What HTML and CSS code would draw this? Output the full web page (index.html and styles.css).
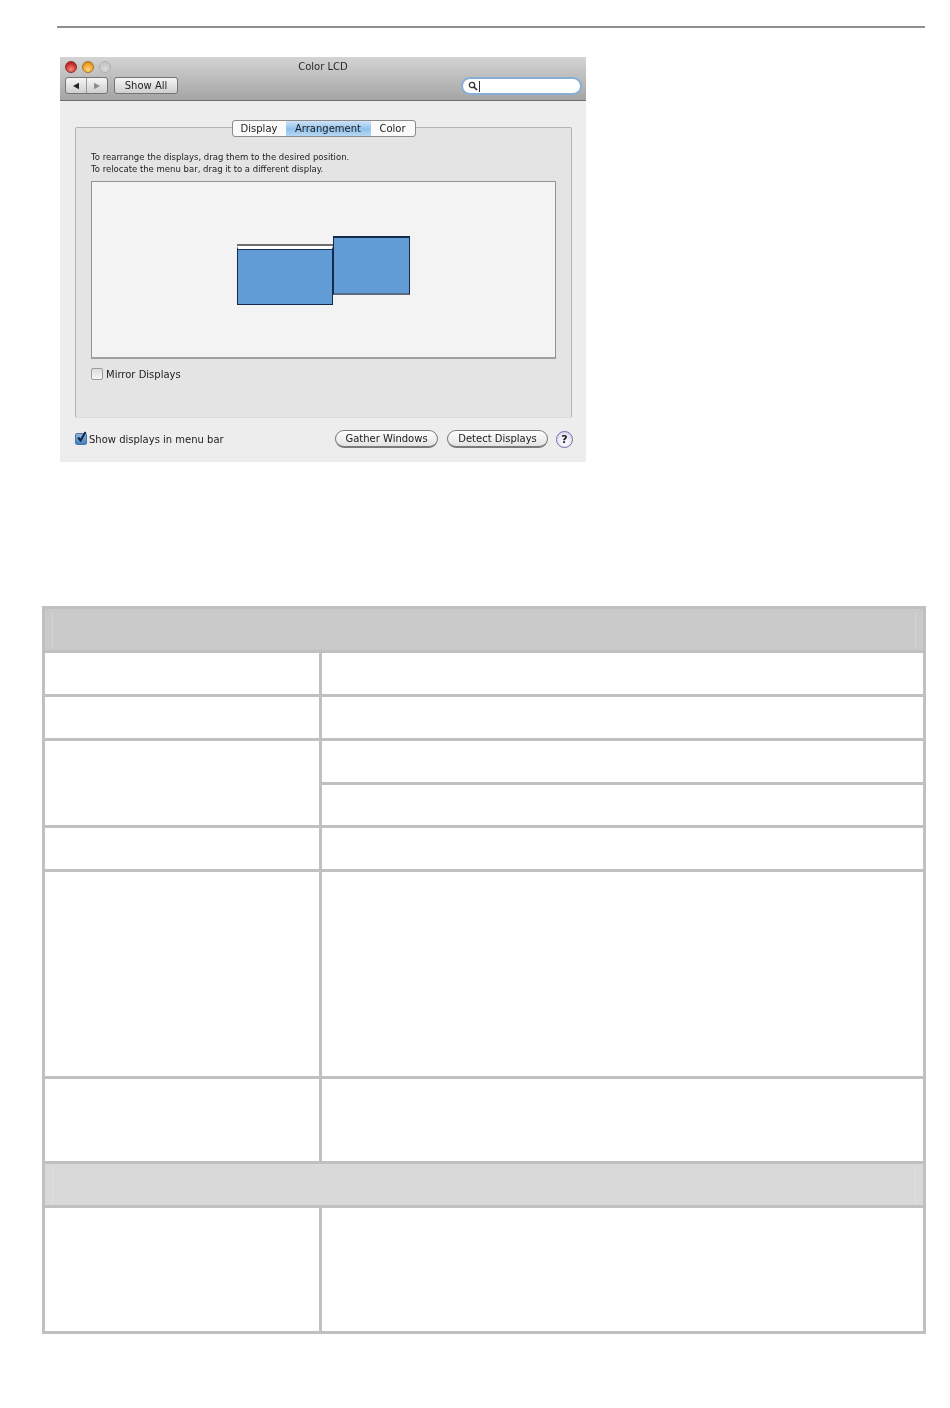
FILE: index.html
```html
<!DOCTYPE html>
<html lang="en">
<head>
    <meta charset="UTF-8">
    <title>Color LCD</title>
    <link rel="stylesheet" href="styles.css">
</head>
<body>
    <hr class="page-rule">

    <div class="prefs-window">
        <div class="titlebar">
            <div class="title-row">
                <div class="lights">
                    <span class="light light-close"></span>
                    <span class="light light-min"></span>
                    <span class="light light-zoom"></span>
                </div>
                <div class="window-title">Color LCD</div>
            </div>
            <div class="toolbar">
                <div class="nav-buttons">
                    <span class="nav-btn"><svg width="8" height="8" viewBox="0 0 8 8"><path d="M1 4 7 .8v6.4z" fill="#222"/></svg></span>
                    <span class="nav-btn"><svg width="8" height="8" viewBox="0 0 8 8"><path d="M7 4 1 .8v6.4z" fill="#8c8c8c"/></svg></span>
                </div>
                <span class="show-all">Show All</span>
                <div class="search-box">
                    <svg width="10" height="10" viewBox="0 0 10 10"><circle cx="4" cy="4" r="2.7" fill="none" stroke="#333" stroke-width="1.3"/><path d="M6 6l3 3" stroke="#333" stroke-width="1.7"/></svg>
                    <span class="caret"></span>
                </div>
            </div>
        </div>

        <div class="window-body">
            <div class="panel">
                <div class="tabs">
                    <span class="tab tab-display">Display</span>
                    <span class="tab tab-active">Arrangement</span>
                    <span class="tab tab-color">Color</span>
                </div>
                <p class="hint">To rearrange the displays, drag them to the desired position.<br>To relocate the menu bar, drag it to a different display.</p>
                <div class="arrange-well">
                    <div class="screen screen-main"></div>
                    <div class="screen screen-second"></div>
                </div>
                <label class="check-row">
                    <span class="checkbox"></span>
                    <span>Mirror Displays</span>
                </label>
            </div>

            <div class="bottom-row">
                <label class="check-row menu-check">
                    <span class="checkbox checkbox-on">
                        <svg width="13" height="13" viewBox="0 0 13 13"><path d="M3 6.5l2.6 3L10.5 1" fill="none" stroke="#16233f" stroke-width="2"/></svg>
                    </span>
                    <span>Show displays in menu bar</span>
                </label>
                <div class="bottom-actions">
                    <span class="pill-btn pill-gather">Gather Windows</span>
                    <span class="pill-btn pill-detect">Detect Displays</span>
                    <span class="help-btn">?</span>
                </div>
            </div>
        </div>
    </div>

    <table class="spec-table">
        <colgroup>
            <col class="col-label">
            <col>
        </colgroup>
        <tr class="row">
            <td class="band band-dark" colspan="2"><div class="band-inner"></div></td>
        </tr>
        <tr class="row"><td></td><td></td></tr>
        <tr class="row"><td></td><td></td></tr>
        <tr class="row"><td rowspan="2"></td><td></td></tr>
        <tr class="row-short"><td></td></tr>
        <tr class="row"><td></td><td></td></tr>
        <tr class="row-big"><td></td><td></td></tr>
        <tr class="row-mid"><td></td><td></td></tr>
        <tr class="row">
            <td class="band band-light" colspan="2"><div class="band-inner"></div></td>
        </tr>
        <tr class="row-large"><td></td><td></td></tr>
    </table>
</body>
</html>
```

FILE: styles.css
```css
body {
    margin: 0;
    height: 1408px;
    background: #fff;
    font-family: "DejaVu Sans", sans-serif;
    color: #222;
    overflow: hidden;
}

.page-rule {
    width: 868px;
    height: 2px;
    margin: 26px 0 0 57px;
    border: none;
    background: #8f8f8f;
}

.prefs-window {
    width: 526px;
    margin: 29px 0 0 60px;
    background: #ededed;
    filter: blur(0.35px);
}

/* title bar + toolbar */
.titlebar {
    height: 44px;
    box-sizing: border-box;
    background: linear-gradient(#d4d4d4, #a4a4a4);
    border-bottom: 1px solid #6f6f6f;
}

.title-row {
    position: relative;
    height: 20px;
    display: flex;
    align-items: center;
    justify-content: center;
}

.window-title {
    font-size: 10px;
    margin-top: -2px;
    color: #2a2a2a;
}

.lights {
    position: absolute;
    left: 5px;
    top: 4px;
    display: flex;
    gap: 5px;
}

.light {
    width: 12px;
    height: 12px;
    border-radius: 50%;
    box-sizing: border-box;
}

.light-close {
    background: radial-gradient(circle at 50% 75%, #f58a80, #c92a26 65%, #8d1f1f);
    border: 1px solid #8a2b2b;
}

.light-min {
    background: radial-gradient(circle at 50% 75%, #fbd680, #ee9b1e 65%, #b9711a);
    border: 1px solid #a87422;
}

.light-zoom {
    background: radial-gradient(circle at 50% 75%, #d8d8d8, #c0c0c0);
    border: 1px solid #b0b0b0;
}

.toolbar {
    height: 18px;
    display: flex;
    align-items: flex-start;
    padding: 0 4px 0 5px;
}

.nav-buttons {
    display: flex;
    width: 43px;
    height: 17px;
    box-sizing: border-box;
    border: 1px solid #747474;
    border-radius: 3px;
    background: linear-gradient(#f6f6f6, #cfcfcf);
}

.nav-btn {
    flex: 1;
    display: flex;
    align-items: center;
    justify-content: center;
}

.nav-btn + .nav-btn {
    border-left: 1px solid #9a9a9a;
}

.show-all {
    width: 64px;
    height: 17px;
    box-sizing: border-box;
    margin-left: 6px;
    border: 1px solid #747474;
    border-radius: 3px;
    background: linear-gradient(#f6f6f6, #cfcfcf);
    font-size: 10px;
    line-height: 15px;
    text-align: center;
}

.search-box {
    margin-left: auto;
    width: 121px;
    height: 18px;
    box-sizing: border-box;
    display: flex;
    align-items: center;
    gap: 1px;
    padding-left: 5px;
    background: #fff;
    border: 2px solid #86aed6;
    border-radius: 9px;
}

.caret {
    width: 1px;
    height: 11px;
    background: #333;
}

/* panel */
.window-body {
    height: 361px;
    box-sizing: border-box;
    padding: 26px 14px 0 15px;
}

.panel {
    height: 291px;
    box-sizing: border-box;
    padding: 0 15px;
    background: #e4e4e4;
    border: 1px solid #b4b4b4;
    border-bottom-color: #dcdcdc;
    border-radius: 2px;
}

.tabs {
    display: flex;
    width: 184px;
    height: 17px;
    box-sizing: border-box;
    margin: -8px auto 0;
    background: #fafafa;
    border: 1px solid #8b8b8b;
    border-radius: 3px;
    font-size: 10px;
    line-height: 15px;
}

.tab {
    text-align: center;
}

.tab-display {
    width: 53px;
}

.tab-active {
    width: 85px;
    background: linear-gradient(#cfe3f6, #8fc1ec 55%, #b7d8f4);
}

.tab-color {
    width: 44px;
}

.hint {
    margin: 14px 0 6px;
    font-size: 8.5px;
    line-height: 12px;
    white-space: nowrap;
}

.arrange-well {
    position: relative;
    height: 178px;
    box-sizing: border-box;
    background: #f3f3f3;
    border: 1px solid #939393;
    border-bottom: 2px solid #a0a0a0;
}

/* screens sit on a free canvas, so absolute is fine */
.screen {
    position: absolute;
    box-sizing: border-box;
    background: #619cd7;
    border: 1px solid #14294b;
}

.screen-main {
    left: 145px;
    top: 64px;
    width: 96px;
    height: 59px;
    border-top: 3px solid #fff;
    box-shadow: 0 -2px 0 #6f6f6f, inset 0 1px 0 #16305c;
}

.screen-second {
    left: 241px;
    top: 54px;
    width: 77px;
    height: 59px;
    border-top-width: 2px;
    border-bottom: 2px solid #5a6b84;
}

.check-row {
    display: flex;
    align-items: center;
    gap: 3px;
    height: 14px;
    margin-top: 8px;
    font-size: 10px;
}

.checkbox {
    width: 12px;
    height: 12px;
    box-sizing: border-box;
    flex: none;
    background: linear-gradient(#dcdcdc, #f6f6f6);
    border: 1px solid #9b9b9b;
    border-radius: 2px;
}

.checkbox-on {
    position: relative;
    background: linear-gradient(#8eb6dc, #3f82c4);
    border-color: #4c77a3;
}

.checkbox-on svg {
    position: absolute;
    left: -1px;
    top: -3px;
}

.bottom-row {
    display: flex;
    align-items: center;
    justify-content: space-between;
    height: 18px;
    margin-top: 12px;
}

.menu-check {
    margin-top: 0;
    gap: 2px;
}

.bottom-actions {
    display: flex;
    align-items: center;
    margin-right: -1px;
}

.pill-btn {
    height: 18px;
    box-sizing: border-box;
    border: 1px solid #7a7a7a;
    border-bottom-width: 2px;
    border-radius: 9px;
    background: linear-gradient(#fff, #e2e2e2);
    font-size: 10px;
    line-height: 15px;
    text-align: center;
}

.pill-gather {
    width: 103px;
}

.pill-detect {
    width: 101px;
    margin-left: 9px;
}

.help-btn {
    width: 17px;
    height: 17px;
    box-sizing: border-box;
    margin-left: 8px;
    border: 1px solid #7b68a8;
    border-radius: 50%;
    background: radial-gradient(circle at 50% 70%, #fff, #d6cfee);
    font-size: 11px;
    font-weight: bold;
    line-height: 15px;
    text-align: center;
}

/* table below the screenshot */
.spec-table {
    width: 884px;
    margin: 144px 0 0 42px;
    table-layout: fixed;
    border-collapse: collapse;
}

.spec-table td {
    padding: 0;
    border: 3px solid #c0c0c0;
}

.col-label {
    width: 277px;
}

.row { height: 44px; }
.row-short { height: 43px; }
.row-big { height: 207px; }
.row-mid { height: 85px; }
.row-large { height: 126px; }

.band-dark {
    background: #cacaca;
}

.band-light {
    background: #d9d9d9;
}

.band-inner {
    height: 36px;
    margin: 0 7px;
    border-left: 1px solid #d4d4d4;
    border-right: 1px solid #d4d4d4;
}

.band-light .band-inner {
    border-color: #e0e0e0;
}
```
